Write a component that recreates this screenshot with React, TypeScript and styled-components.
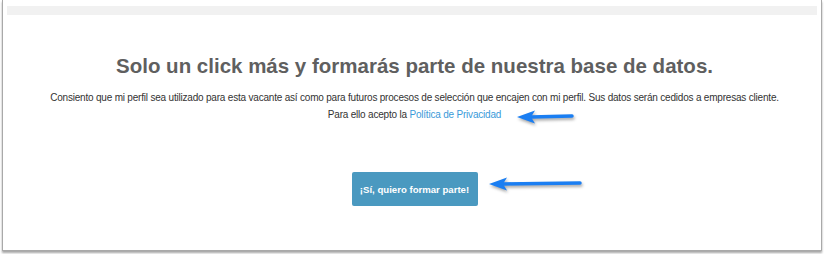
import React from "react";
import styled, { createGlobalStyle } from "styled-components";

const Global = createGlobalStyle`
  html, body {
    margin: 0;
    padding: 0;
    background: #ffffff;
  }
  body {
    font-family: "Liberation Sans", Arial, sans-serif;
  }
`;

const Page = styled.div`
  width: 825px;
  height: 254px;
  padding: 0 3px 0 2px;
  box-sizing: border-box;
`;

const Frame = styled.div`
  position: relative;
  height: 251px;
  box-sizing: border-box;
  border: 1px solid #a9a9a9;
  border-top: none;
  box-shadow: 0 2px 2px rgba(0, 0, 0, 0.35);
  background: #fff;
  padding: 6px 4px 0 4px;
`;

const TopBar = styled.div`
  height: 9px;
  background: #f1f1f1;
`;

const Content = styled.div`
  display: flex;
  flex-direction: column;
  align-items: center;
  padding-left: 5px;
`;

const Title = styled.h1`
  margin: 38px 0 0 0;
  font-size: 20.5px;
  line-height: 26px;
  font-weight: bold;
  color: #5f5f5f;
`;

const Text = styled.p`
  margin: 10px 0 0 0;
  font-size: 10px;
  letter-spacing: -0.2px;
  line-height: 17px;
  color: #333;
  text-align: center;
  white-space: nowrap;
`;

const Link = styled.a`
  color: #3a9ad9;
  text-decoration: none;
`;

const Button = styled.button`
  margin-top: 49px;
  width: 126px;
  height: 34px;
  border: none;
  border-radius: 2px;
  background: #4a99c0;
  color: #fff;
  font-family: "Liberation Sans", Arial, sans-serif;
  font-size: 9.6px;
  font-weight: bold;
  padding: 0;
`;

const Arrow = styled.svg<{ $left: number; $top: number; $w: number }>`
  position: absolute;
  left: ${(p) => p.$left}px;
  top: ${(p) => p.$top}px;
  width: ${(p) => p.$w}px;
  height: 16px;
  overflow: visible;
  filter: drop-shadow(1px 2px 1.5px rgba(0, 0, 0, 0.35));
`;

const BlueArrow = ({ left, top, w }: { left: number; top: number; w: number }) => (
  <Arrow $left={left} $top={top} $w={w} viewBox={`0 0 ${w} 16`}>
    <path
      d={`M14 8 L${w - 2} 7`}
      stroke="#1a7ef2"
      strokeWidth="3.5"
      strokeLinecap="round"
      fill="none"
    />
    <path d="M0 8 L18 1.5 L14 8 L18 14.5 Z" fill="#1a7ef2" />
  </Arrow>
);

const App = () => {
  return (
    <Page>
      <Global />
      <Frame>
        <TopBar />
        <Content>
          <Title>Solo un click más y formarás parte de nuestra base de datos.</Title>
          <Text>
            Consiento que mi perfil sea utilizado para esta vacante así como para futuros procesos de selección que encajen con mi perfil. Sus datos serán cedidos a empresas cliente.
            <br />
            Para ello acepto la <Link href="#">Política de Privacidad</Link>
          </Text>
          <Button>¡Sí, quiero formar parte!</Button>
        </Content>
        <BlueArrow left={514} top={109} w={57} />
        <BlueArrow left={486} top={176} w={93} />
      </Frame>
    </Page>
  );
};

export default App;
